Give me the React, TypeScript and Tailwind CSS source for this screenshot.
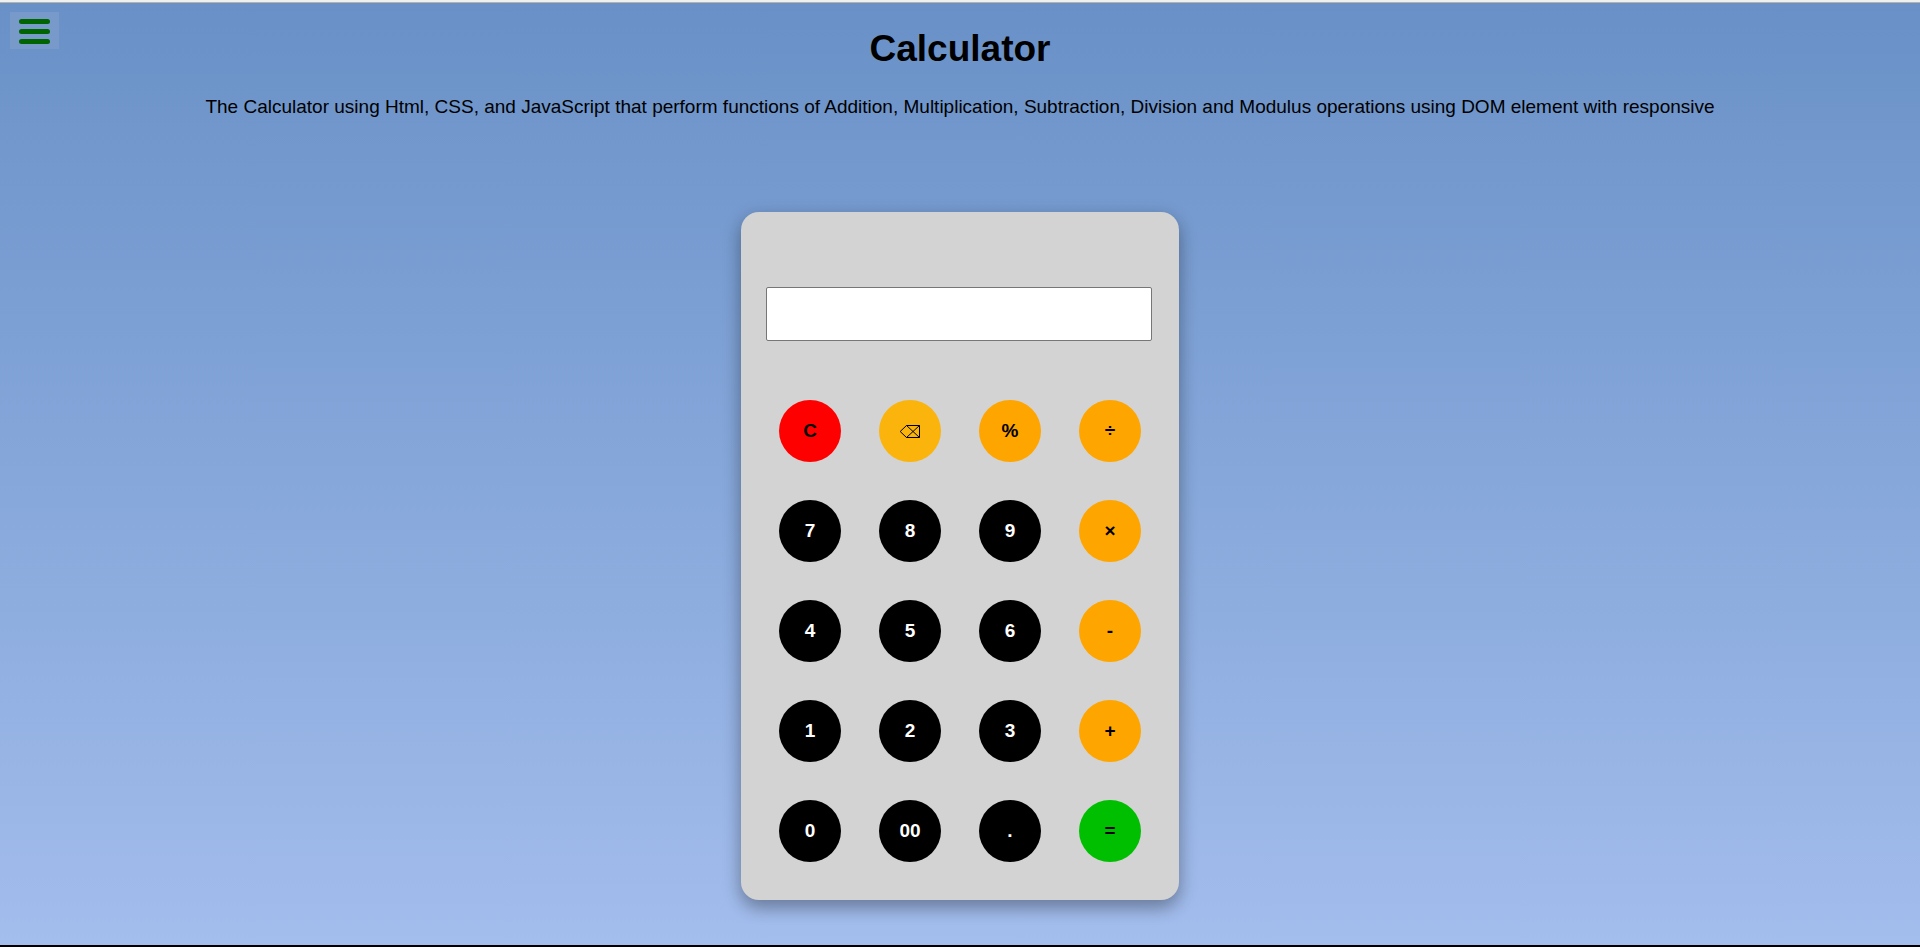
import { useState } from "react";

type Key = { label: string; tone: "clear" | "back" | "op" | "digit" | "equals" };

const keys: Key[] = [
  { label: "C", tone: "clear" },
  { label: "⌫", tone: "back" },
  { label: "%", tone: "op" },
  { label: "÷", tone: "op" },
  { label: "7", tone: "digit" },
  { label: "8", tone: "digit" },
  { label: "9", tone: "digit" },
  { label: "×", tone: "op" },
  { label: "4", tone: "digit" },
  { label: "5", tone: "digit" },
  { label: "6", tone: "digit" },
  { label: "-", tone: "op" },
  { label: "1", tone: "digit" },
  { label: "2", tone: "digit" },
  { label: "3", tone: "digit" },
  { label: "+", tone: "op" },
  { label: "0", tone: "digit" },
  { label: "00", tone: "digit" },
  { label: ".", tone: "digit" },
  { label: "=", tone: "equals" },
];

const tones = {
  clear: "bg-[#ff0000] text-black",
  back: "bg-[#fbb40c] text-black",
  op: "bg-[#ffa500] text-black",
  digit: "bg-black text-white",
  equals: "bg-[#00be00] text-black",
};

// Evaluates left to right, multiplication-like operators first.
function evaluate(expression: string): string {
  const tokens = expression.match(/\d*\.?\d+|[-+×÷%]/g) ?? [];
  const terms: number[] = [];
  let op = "+";
  for (const token of tokens) {
    if (/^[-+×÷%]$/.test(token)) {
      op = token;
      continue;
    }
    const value = Number(token);
    const last = terms.length - 1;
    if (op === "+") terms.push(value);
    else if (op === "-") terms.push(-value);
    else if (last < 0) terms.push(value);
    else if (op === "×") terms[last] *= value;
    else if (op === "÷") terms[last] /= value;
    else terms[last] %= value;
  }
  return terms.length ? String(terms.reduce((a, b) => a + b, 0)) : "";
}

function BackspaceIcon() {
  return (
    <svg width="22" height="14" viewBox="0 0 22 14" fill="none" stroke="currentColor" strokeWidth="1" aria-hidden="true">
      <path d="M7.5 1.5H20.5V13.5H7.5L1.2 7.5Z" />
      <path d="M7.5 1.5L20.5 13.5M7.5 13.5L20.5 1.5" />
    </svg>
  );
}

export default function App() {
  const [display, setDisplay] = useState("");

  const press = ({ label, tone }: Key) => {
    if (tone === "clear") setDisplay("");
    else if (tone === "back") setDisplay((d) => d.slice(0, -1));
    else if (tone === "equals") setDisplay((d) => evaluate(d));
    else setDisplay((d) => d + label);
  };

  return (
    <div className="relative flex min-h-screen flex-col border-b-2 border-black bg-linear-to-t from-[#a3bded] to-[#6991c7] font-['Liberation_Sans',Arial,sans-serif] text-black">
      <div className="h-[3px] border-b border-[#b4b4ac] bg-[#f0f0f0]" />
      <button
        type="button"
        aria-label="Menu"
        className="absolute top-3 left-2.5 flex h-[37px] w-[49px] flex-col items-center gap-[5px] bg-[#789aca] pt-[7px]"
      >
        <span className="h-[5px] w-[31px] rounded-full bg-[#006400]" />
        <span className="h-[5px] w-[31px] rounded-full bg-[#006400]" />
        <span className="h-[5px] w-[31px] rounded-full bg-[#006400]" />
      </button>
      <header className="px-4 pt-6 text-center">
        <h1 className="text-[37px] leading-[44px] font-bold">Calculator</h1>
        <p className="mt-6 text-[19px] leading-6">
          The Calculator using Html, CSS, and JavaScript that perform functions of Addition, Multiplication, Subtraction,
          Division and Modulus operations using DOM element with responsive
        </p>
      </header>
      <main className="flex justify-center pt-[93px] pb-[45px]">
        <section
          aria-label="Calculator"
          className="rounded-[18px] bg-[#d3d3d3] pt-[75px] pr-[27px] pb-[38px] pl-[25px] shadow-[0_8px_16px_rgba(0,0,0,0.2),0_6px_20px_rgba(0,0,0,0.19)]"
        >
          <input
            type="text"
            aria-label="Result"
            value={display}
            readOnly
            className="block h-[54px] w-[386px] rounded-[2px] border border-[#767676] bg-white px-2 text-right text-2xl"
          />
          <div className="mt-[59px] grid grid-cols-[repeat(4,62px)] gap-[38px] pl-[13px]">
            {keys.map((key) => (
              <button
                key={key.label}
                type="button"
                aria-label={key.tone === "back" ? "Backspace" : undefined}
                onClick={() => press(key)}
                className={`flex size-[62px] items-center justify-center rounded-full text-[19px] font-bold ${tones[key.tone]}`}
              >
                {key.tone === "back" ? <BackspaceIcon /> : key.label}
              </button>
            ))}
          </div>
        </section>
      </main>
    </div>
  );
}
